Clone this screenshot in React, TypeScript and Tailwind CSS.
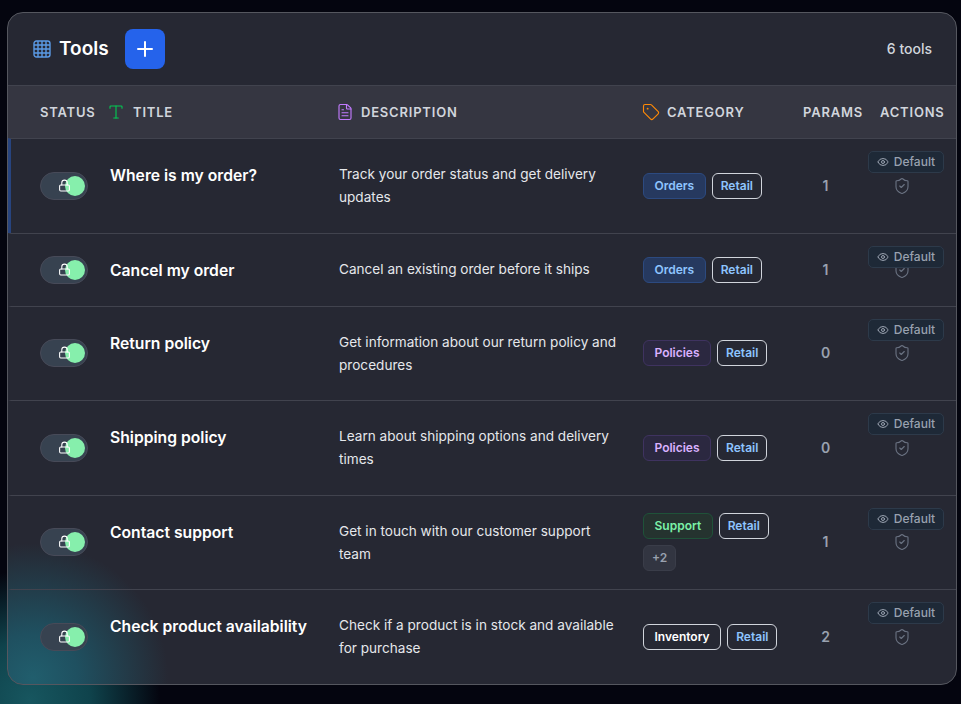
import { Eye, FileText, Lock, Plus, ShieldCheck, Tag, Type } from "lucide-react";

type Chip = { label: string; className: string };

const retail = "border-gray-300 bg-transparent px-2 text-blue-300";
const orders = { label: "Orders", className: "border-[#2c4a80] bg-[#26395f] px-[10.5px] text-blue-300" };
const policies = { label: "Policies", className: "border-[#3f3360] bg-[#2b2840] px-[10.5px] text-purple-300" };

const tools: {
  title: string;
  description: string;
  chips: Chip[];
  extra?: string;
  params: number;
  height: string;
}[] = [
  { title: "Where is my order?", description: "Track your order status and get delivery updates", chips: [orders], params: 1, height: "h-[94.5px]" },
  { title: "Cancel my order", description: "Cancel an existing order before it ships", chips: [orders], params: 1, height: "h-[73px]" },
  { title: "Return policy", description: "Get information about our return policy and procedures", chips: [policies], params: 0, height: "h-[94.5px]" },
  { title: "Shipping policy", description: "Learn about shipping options and delivery times", chips: [policies], params: 0, height: "h-[94.5px]" },
  {
    title: "Contact support",
    description: "Get in touch with our customer support team",
    chips: [{ label: "Support", className: "border-[#1f5239] bg-[#25332f] px-[10.5px] text-green-300" }],
    extra: "+2",
    params: 1,
    height: "h-[94.5px]",
  },
  {
    title: "Check product availability",
    description: "Check if a product is in stock and available for purchase",
    chips: [{ label: "Inventory", className: "border-gray-300 bg-transparent px-[10.5px] text-white" }],
    params: 2,
    height: "h-[95px]",
  },
];

function Badge({ label, className }: Chip) {
  return (
    <span className={`flex h-[26px] items-center rounded-md border text-xs font-semibold ${className}`}>{label}</span>
  );
}

function LockedSwitch() {
  return (
    <div className="relative h-7 w-12 rounded-full border border-[#474a58] bg-[#374250]">
      <span className="absolute right-[2px] top-[3px] h-5 w-5 rounded-full bg-[#86efac]" />
      <Lock className="absolute left-[17px] top-[6px] h-[13px] w-[13px] text-white" strokeWidth={2} />
    </div>
  );
}

function ToolRow({ tool, first }: { tool: (typeof tools)[number]; first: boolean }) {
  return (
    <div
      className={`flex border-t border-[#41434e] ${tool.height} ${first ? "border-l-[3px] border-l-[#27447f]" : "border-l-[3px] border-l-transparent"}`}
    >
      <div className="flex w-[99px] shrink-0 items-center pl-[29px]">
        <LockedSwitch />
      </div>
      <div className="w-[229px] shrink-0 pt-[25px] text-[15.7px] font-semibold leading-6 text-white">{tool.title}</div>
      <div className="w-[304px] shrink-0 pr-5 pt-[24px] text-[13.6px] leading-[23px] text-gray-200">
        {tool.description}
      </div>
      <div className="flex w-[160px] shrink-0 flex-wrap content-center items-center gap-[6px]">
        {tool.chips.map((chip) => (
          <Badge key={chip.label} {...chip} />
        ))}
        <Badge label="Retail" className={retail} />
        {tool.extra && <Badge label={tool.extra} className="border-[#3a3d49] bg-[#323541] px-2 text-gray-400" />}
      </div>
      <div className="flex w-[45px] shrink-0 items-center justify-center text-sm font-semibold text-gray-400">
        {tool.params}
      </div>
      <div className="relative flex flex-1 items-center justify-center">
        <span className="absolute right-[12px] top-[12px] flex h-[22px] w-[76px] items-center justify-center gap-[5px] rounded-[5px] border border-[#2d3a4a] bg-[#1e2937] text-xs font-medium text-gray-400">
          <Eye className="h-3 w-3" />
          Default
        </span>
        <ShieldCheck className="h-[18px] w-[18px] text-gray-500" strokeWidth={1.5} />
      </div>
    </div>
  );
}

function HeadLabel({ children }: { children: string }) {
  return <span className="text-[13px] font-semibold leading-5 tracking-[0.8px] text-gray-300">{children}</span>;
}

export default function App() {
  return (
    <div className="h-[704px] w-[961px] overflow-hidden bg-[#04050f] bg-[radial-gradient(circle_at_30px_700px,#17565f_0px,#0f434c_60px,#04050f_130px)] px-[7px] pt-3 font-['Inter',sans-serif]">
      <div className="h-[673px] w-[950px] overflow-hidden rounded-2xl border border-[#55575f] bg-[#262833] bg-[radial-gradient(circle_at_25px_665px,#215e6d_0px,#1f5060_45px,#262833_135px)]">
        <div className="flex h-[72px] items-center px-6">
          <svg viewBox="0 0 18 18" className="ml-[1px] h-[18px] w-[18px] text-[#5b9ae6]" fill="none" stroke="currentColor" strokeWidth="1.4">
            <rect x="1" y="1" width="16" height="16" rx="2.5" />
            <path d="M5 1v16M9 1v16M13 1v16M1 5h16M1 9h16M1 13h16" />
          </svg>
          <h1 className="ml-[8px] text-[19px] font-semibold text-white">Tools</h1>
          <button className="ml-4 flex h-10 w-10 items-center justify-center rounded-lg bg-[#2563eb] text-white">
            <Plus className="h-6 w-6" strokeWidth={2} />
          </button>
          <span className="ml-auto text-sm font-medium text-gray-300">6 tools</span>
        </div>
        <div className="flex h-[53px] items-center border-t border-[#41434e] bg-[#353641]">
          <div className="flex w-[102px] shrink-0 items-center pl-8">
            <HeadLabel>STATUS</HeadLabel>
          </div>
          <div className="-ml-[3px] flex w-[232px] shrink-0 items-center gap-2">
            <Type className="h-[18px] w-[18px] text-green-500" strokeWidth={1.5} />
            <HeadLabel>TITLE</HeadLabel>
          </div>
          <div className="-ml-[3px] flex w-[307px] shrink-0 items-center gap-[7px]">
            <FileText className="h-[18px] w-[18px] text-purple-400" strokeWidth={1.5} />
            <HeadLabel>DESCRIPTION</HeadLabel>
          </div>
          <div className="-ml-[1px] flex w-[161px] shrink-0 items-center gap-[7px]">
            <Tag className="h-[18px] w-[18px] text-orange-400" strokeWidth={1.5} />
            <HeadLabel>CATEGORY</HeadLabel>
          </div>
          <div className="flex w-[77px] shrink-0 items-center">
            <HeadLabel>PARAMS</HeadLabel>
          </div>
          <HeadLabel>ACTIONS</HeadLabel>
        </div>
        {tools.map((tool, i) => (
          <ToolRow key={tool.title} tool={tool} first={i === 0} />
        ))}
      </div>
    </div>
  );
}
